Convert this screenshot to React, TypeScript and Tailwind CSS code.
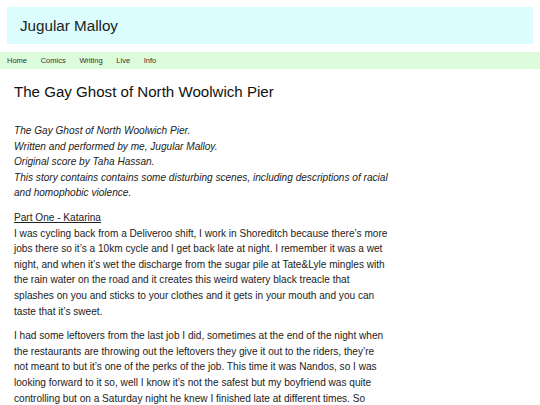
export default function App() {
  return (
    <div className="h-[405px] overflow-hidden bg-white text-[#222] [font-family:'Liberation_Sans',Arial,sans-serif]">
      <header className="mx-[7px] pt-[7px]">
        <div className="flex h-[37px] items-center bg-[#dbfdfe] pl-[13px] text-[15.2px] leading-none text-[#222]">
          Jugular Malloy
        </div>
      </header>
      <nav className="mt-[8px] flex h-[17px] items-center gap-[13.7px] bg-[#dcfcdc] pl-[7px] text-[7.5px] text-[#333]">
        <a>Home</a>
        <a>Comics</a>
        <a>Writing</a>
        <a>Live</a>
        <a>Info</a>
      </nav>
      <main className="px-[14px]">
        <h1 className="mt-[14px] text-[15.1px] leading-[17px] text-[#111]">
          The Gay Ghost of North Woolwich Pier
        </h1>
        <div className="mt-[23px] w-[377px] text-[10.1px] leading-[15.6px]">
          <p className="italic">
            The Gay Ghost of North Woolwich Pier.
            <br />
            Written and performed by me, Jugular Malloy.
            <br />
            Original score by Taha Hassan.
            <br />
            This story contains contains some disturbing scenes, including descriptions of racial and homophobic violence.
          </p>
          <p className="mt-[9px]">
            <u>Part One - Katarina</u>
            <br />
            I was cycling back from a Deliveroo shift, I work in Shoreditch because there’s more jobs there so it’s a 10km cycle and I get back late at night. I remember it was a wet night, and when it’s wet the discharge from the sugar pile at Tate&amp;Lyle mingles with the rain water on the road and it creates this weird watery black treacle that splashes on you and sticks to your clothes and it gets in your mouth and you can taste that it’s sweet.
          </p>
          <p className="mt-[9px]">
            I had some leftovers from the last job I did, sometimes at the end of the night when the restaurants are throwing out the leftovers they give it out to the riders, they’re not meant to but it’s one of the perks of the job. This time it was Nandos, so I was looking forward to it so, well I know it’s not the safest but my boyfriend was quite controlling but on a Saturday night he knew I finished late at different times. So instead of going straight home I went along the river, past the pier, because I wanted to eat my chicken in peace.
          </p>
        </div>
      </main>
    </div>
  );
}
